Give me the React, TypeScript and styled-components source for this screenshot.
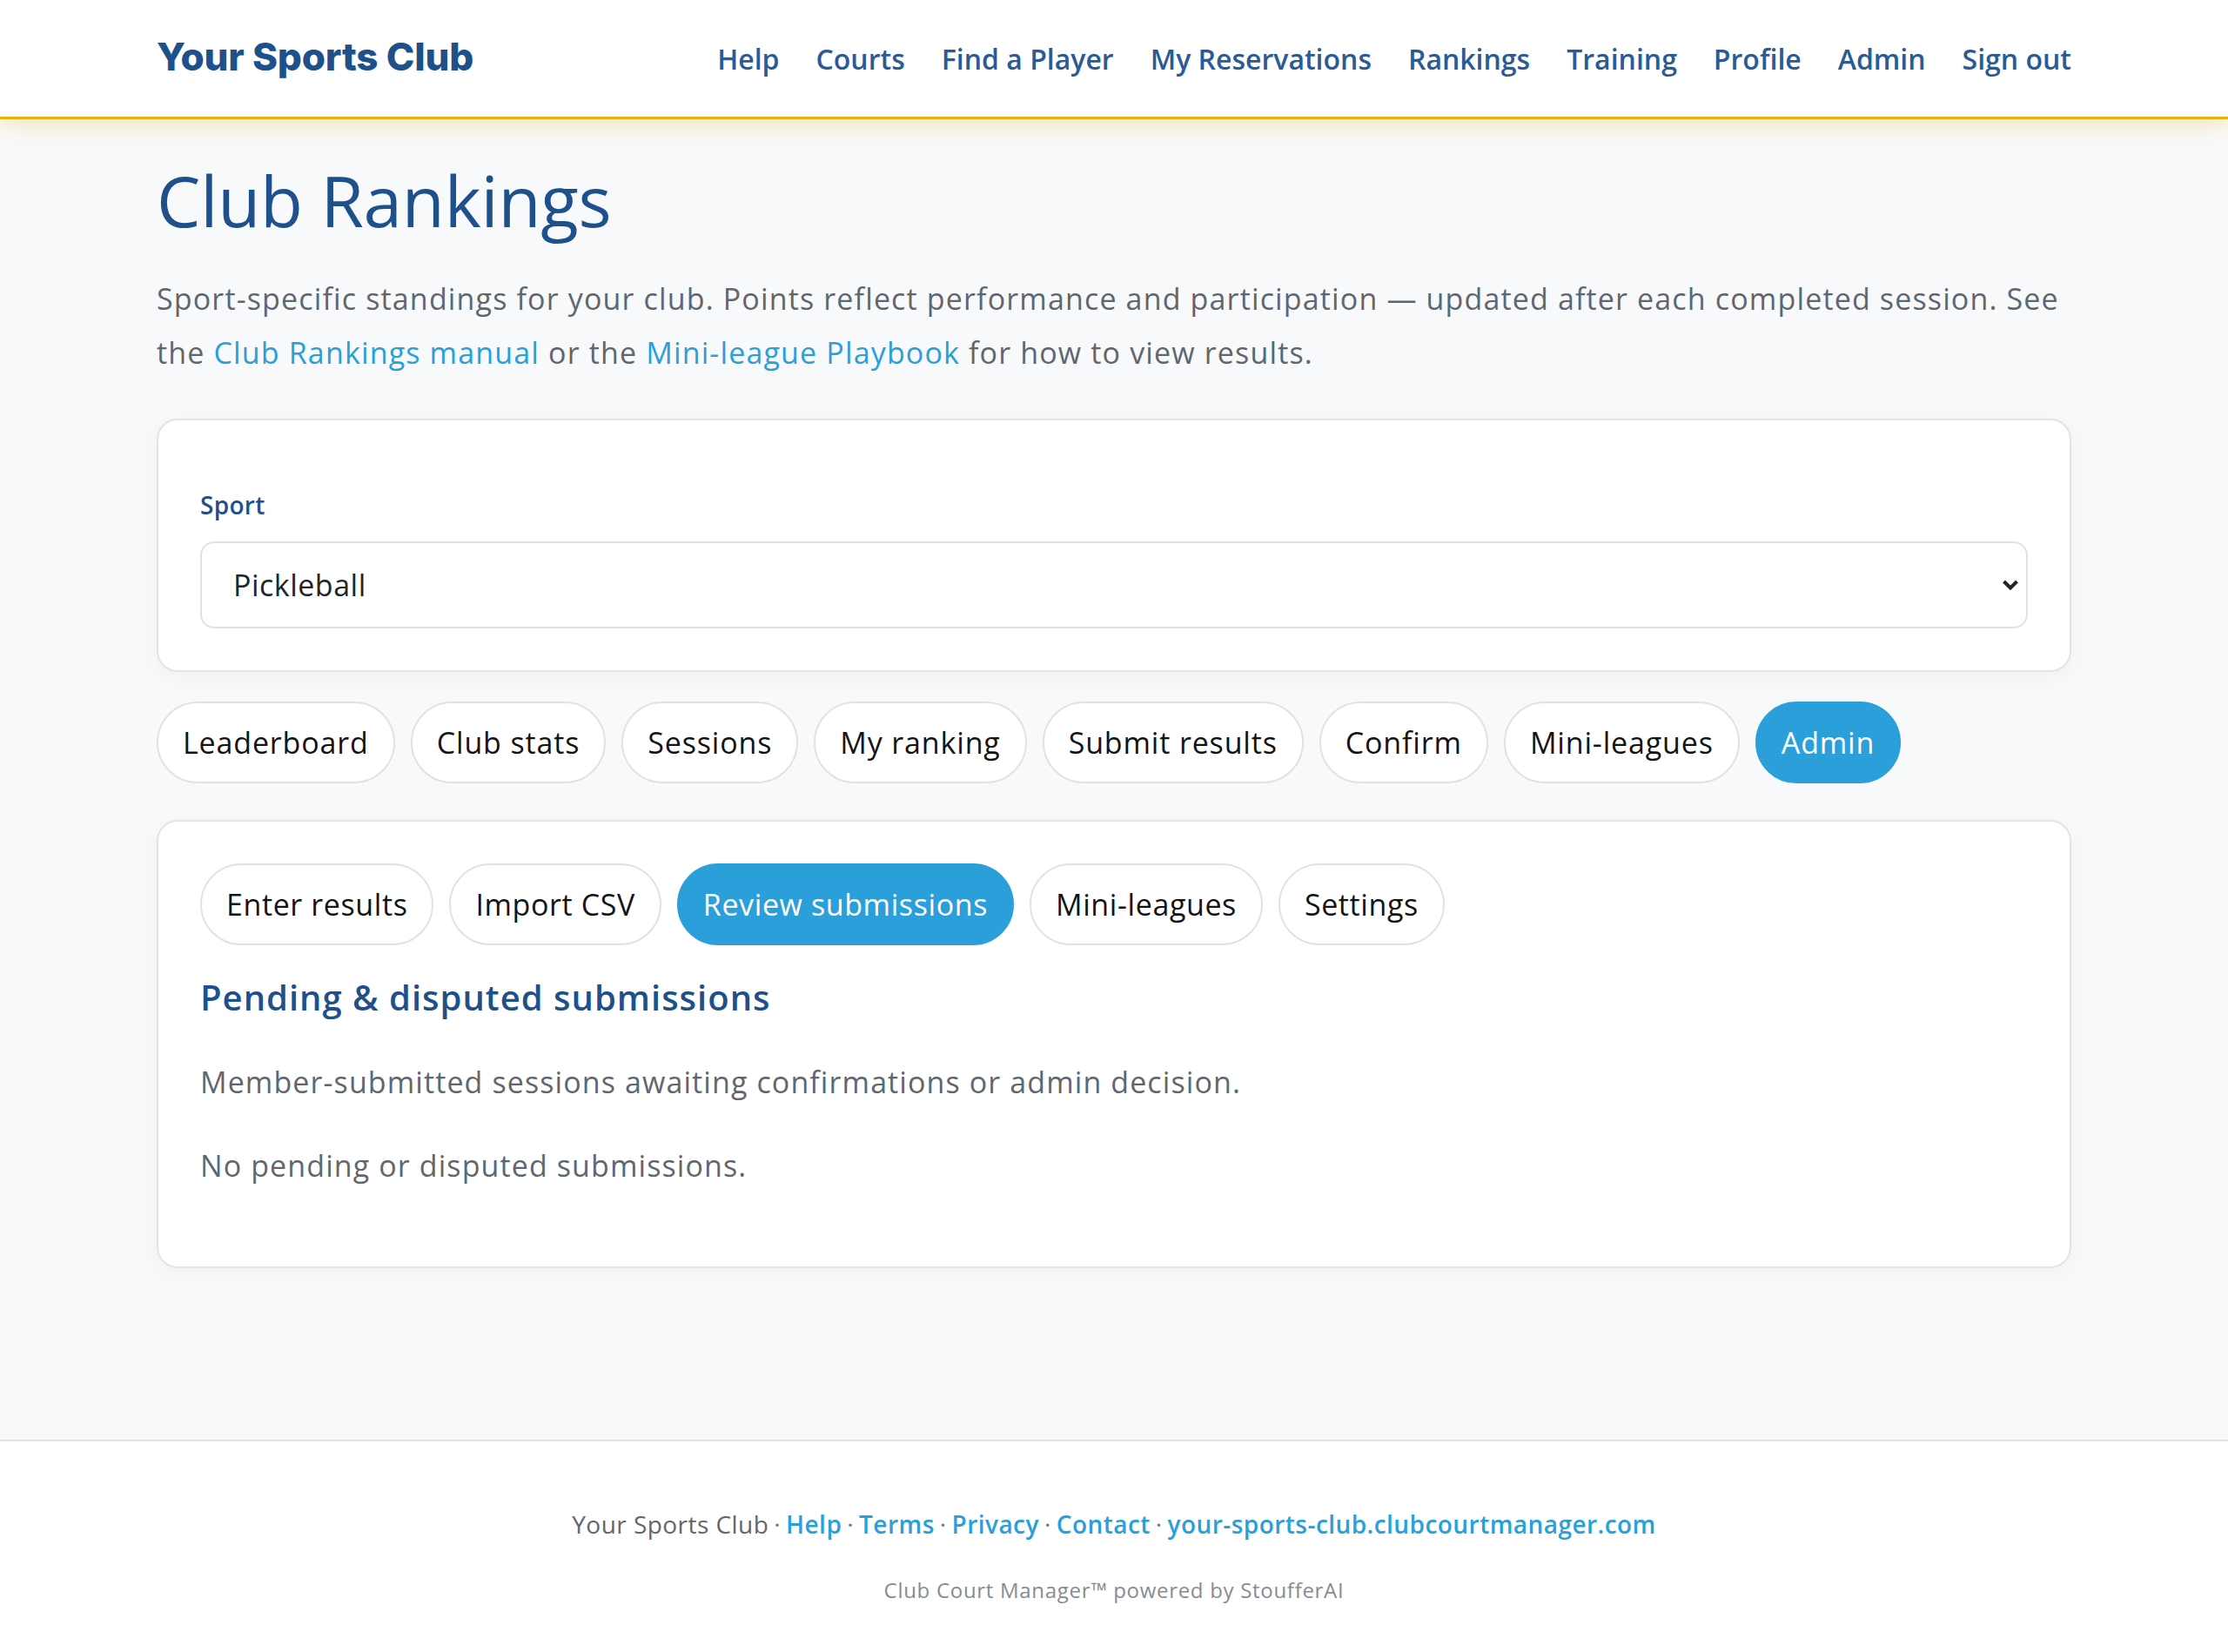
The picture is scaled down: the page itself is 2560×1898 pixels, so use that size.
import React from "react";
import styled, { createGlobalStyle } from "styled-components";

const GlobalStyle = createGlobalStyle`
  html, body { margin: 0; padding: 0; }
  body {
    background: #f8f9fa;
    font-family: "Open Sans", "Noto Sans", sans-serif;
    color: #212529;
  }
  * { box-sizing: border-box; }
`;

const Page = styled.div`
  min-height: 100vh;
  display: flex;
  flex-direction: column;
`;

const Header = styled.header`
  background: #ffffff;
  height: 137px;
  border-bottom: 3px solid #e9b10a;
  box-shadow: 0 6px 24px rgba(233, 177, 10, 0.26);
  position: relative;
  z-index: 2;
`;

const Container = styled.div`
  width: 2200px;
  margin: 0 auto;
`;

const HeaderInner = styled(Container)`
  height: 100%;
  display: flex;
  align-items: center;
  justify-content: space-between;
`;

const Logo = styled.a`
  font-family: Inter, "Open Sans", sans-serif;
  font-weight: 800;
  font-size: 44px;
  letter-spacing: -0.2px;
  color: #1e508c;
  text-decoration: none;
  margin-top: -4px;
`;

const Nav = styled.nav`
  display: flex;
  align-items: center;
  gap: 42px;
`;

const NavLink = styled.a`
  font-size: 32px;
  font-weight: 600;
  color: #2a5b95;
  text-decoration: none;
`;

const Main = styled.main`
  flex: 1;
  padding: 45px 0 160px;
`;

const Title = styled.h1`
  margin: 0;
  font-size: 80px;
  line-height: 96px;
  font-weight: 500;
  color: #1e508c;
  letter-spacing: -0.2px;
`;

const Lead = styled.p`
  margin: 34px 0 0;
  font-size: 34px;
  line-height: 62px;
  letter-spacing: 1.15px;
  color: #5f6670;
`;

const TextLink = styled.a`
  color: #2a9fd8;
  text-decoration: none;
`;

const Card = styled.section<{ $top: number; $padTop?: number }>`
  margin-top: ${(p) => p.$top}px;
  background: #ffffff;
  border: 2px solid #e4e4e4;
  border-radius: 24px;
  padding: ${(p) => p.$padTop ?? 48}px 48px 48px;
  box-shadow: 0 6px 24px rgba(0, 0, 0, 0.035);
`;

const FieldLabel = styled.label`
  display: block;
  font-size: 28px;
  line-height: 42px;
  font-weight: 600;
  letter-spacing: 0.3px;
  color: #1e508c;
`;

const SelectWrap = styled.div`
  position: relative;
  margin-top: 21px;
`;

const Select = styled.select`
  appearance: none;
  -webkit-appearance: none;
  width: 100%;
  height: 100px;
  border: 2px solid #dfe1e4;
  border-radius: 16px;
  background: #ffffff;
  padding: 0 36px;
  font-family: "Open Sans", "Noto Sans", sans-serif;
  font-size: 34px;
  letter-spacing: 0.5px;
  color: #212529;
  outline: none;
`;

const Chevron = styled.svg`
  position: absolute;
  right: 10px;
  top: 50%;
  transform: translateY(-50%);
  pointer-events: none;
`;

const PillRow = styled.div<{ $top: number }>`
  margin-top: ${(p) => p.$top}px;
  display: flex;
  flex-wrap: wrap;
  gap: 18px;
`;

const Pill = styled.button<{ $active?: boolean; $tight?: boolean }>`
  height: 94px;
  padding: 0 28px;
  border-radius: 999px;
  border: 2px solid ${(p) => (p.$active ? "#2b9fda" : "#e2e2e2")};
  background: ${(p) => (p.$active ? "#2b9fda" : "#ffffff")};
  color: ${(p) => (p.$active ? "#ffffff" : "#141414")};
  font-family: "Open Sans", "Noto Sans", sans-serif;
  font-size: 34px;
  letter-spacing: ${(p) => (p.$tight ? 0.6 : 0.85)}px;
  font-weight: 400;
  cursor: pointer;
`;

const SectionTitle = styled.h2`
  margin: 36px 0 0;
  font-size: 40px;
  line-height: 48px;
  font-weight: 600;
  letter-spacing: 1px;
  color: #1e508c;
`;

const Muted = styled.p<{ $top: number; $bottom?: number }>`
  margin: ${(p) => p.$top}px 0 ${(p) => p.$bottom ?? 0}px;
  font-size: 34px;
  line-height: 51px;
  letter-spacing: 1.1px;
  color: #5f6670;
`;

const Footer = styled.footer`
  background: #ffffff;
  border-top: 2px solid #e3e3e3;
  padding: 74px 0 53px;
  text-align: center;
`;

const FooterLine = styled.div`
  font-size: 28px;
  line-height: 42px;
  letter-spacing: 0.45px;
  color: #5f6670;
`;

const FooterLink = styled.a`
  color: #2a9fd8;
  font-weight: 600;
  text-decoration: none;
`;

const Sep = styled.span`
  color: #6c737c;
  padding: 0 6px;
`;

const Powered = styled.div`
  margin-top: 37px;
  font-size: 24px;
  line-height: 36px;
  letter-spacing: 0.7px;
  color: #868c94;
`;

const navItems = [
  "Help",
  "Courts",
  "Find a Player",
  "My Reservations",
  "Rankings",
  "Training",
  "Profile",
  "Admin",
  "Sign out",
];

const mainTabs = [
  "Leaderboard",
  "Club stats",
  "Sessions",
  "My ranking",
  "Submit results",
  "Confirm",
  "Mini-leagues",
  "Admin",
];

const adminTabs = [
  "Enter results",
  "Import CSV",
  "Review submissions",
  "Mini-leagues",
  "Settings",
];

const footerLinks = [
  "Help",
  "Terms",
  "Privacy",
  "Contact",
  "your-sports-club.clubcourtmanager.com",
];

export default function App() {
  return (
    <Page>
      <GlobalStyle />
      <Header>
        <HeaderInner>
          <Logo href="#">Your Sports Club</Logo>
          <Nav>
            {navItems.map((n) => (
              <NavLink key={n} href="#">
                {n}
              </NavLink>
            ))}
          </Nav>
        </HeaderInner>
      </Header>

      <Main>
        <Container>
          <Title>Club Rankings</Title>
          <Lead>
            {"Sport-specific standings for your club. Points reflect performance and participation — updated after each completed session. See"}
            {" "}
            {"the"}
            {" "}
            <TextLink href="#">Club Rankings manual</TextLink>
            {" or the "}
            <TextLink href="#">Mini-league Playbook</TextLink>
            {" for how to view results."}
          </Lead>

          <Card $top={45} $padTop={76}>
            <FieldLabel htmlFor="sport">Sport</FieldLabel>
            <SelectWrap>
              <Select id="sport" defaultValue="pickleball">
                <option value="pickleball">Pickleball</option>
                <option value="tennis">Tennis</option>
                <option value="padel">Padel</option>
              </Select>
              <Chevron width="20" height="14" viewBox="0 0 20 14">
                <path
                  d="M2.5 3 L10 10.5 L17.5 3"
                  fill="none"
                  stroke="#212529"
                  strokeWidth="4"
                />
              </Chevron>
            </SelectWrap>
          </Card>

          <PillRow $top={34}>
            {mainTabs.map((t) => (
              <Pill key={t} $active={t === "Admin"}>
                {t}
              </Pill>
            ))}
          </PillRow>

          <Card $top={42}>
            <PillRow $top={0}>
              {adminTabs.map((t) => (
                <Pill key={t} $tight $active={t === "Review submissions"}>
                  {t}
                </Pill>
              ))}
            </PillRow>
            <SectionTitle>Pending &amp; disputed submissions</SectionTitle>
            <Muted $top={48}>
              Member-submitted sessions awaiting confirmations or admin
              decision.
            </Muted>
            <Muted $top={45} $bottom={42}>
              No pending or disputed submissions.
            </Muted>
          </Card>
        </Container>
      </Main>

      <Footer>
        <FooterLine>
          Your Sports Club
          {footerLinks.map((l) => (
            <React.Fragment key={l}>
              <Sep>·</Sep>
              <FooterLink href="#">{l}</FooterLink>
            </React.Fragment>
          ))}
        </FooterLine>
        <Powered>Club Court Manager™ powered by StoufferAI</Powered>
      </Footer>
    </Page>
  );
}
